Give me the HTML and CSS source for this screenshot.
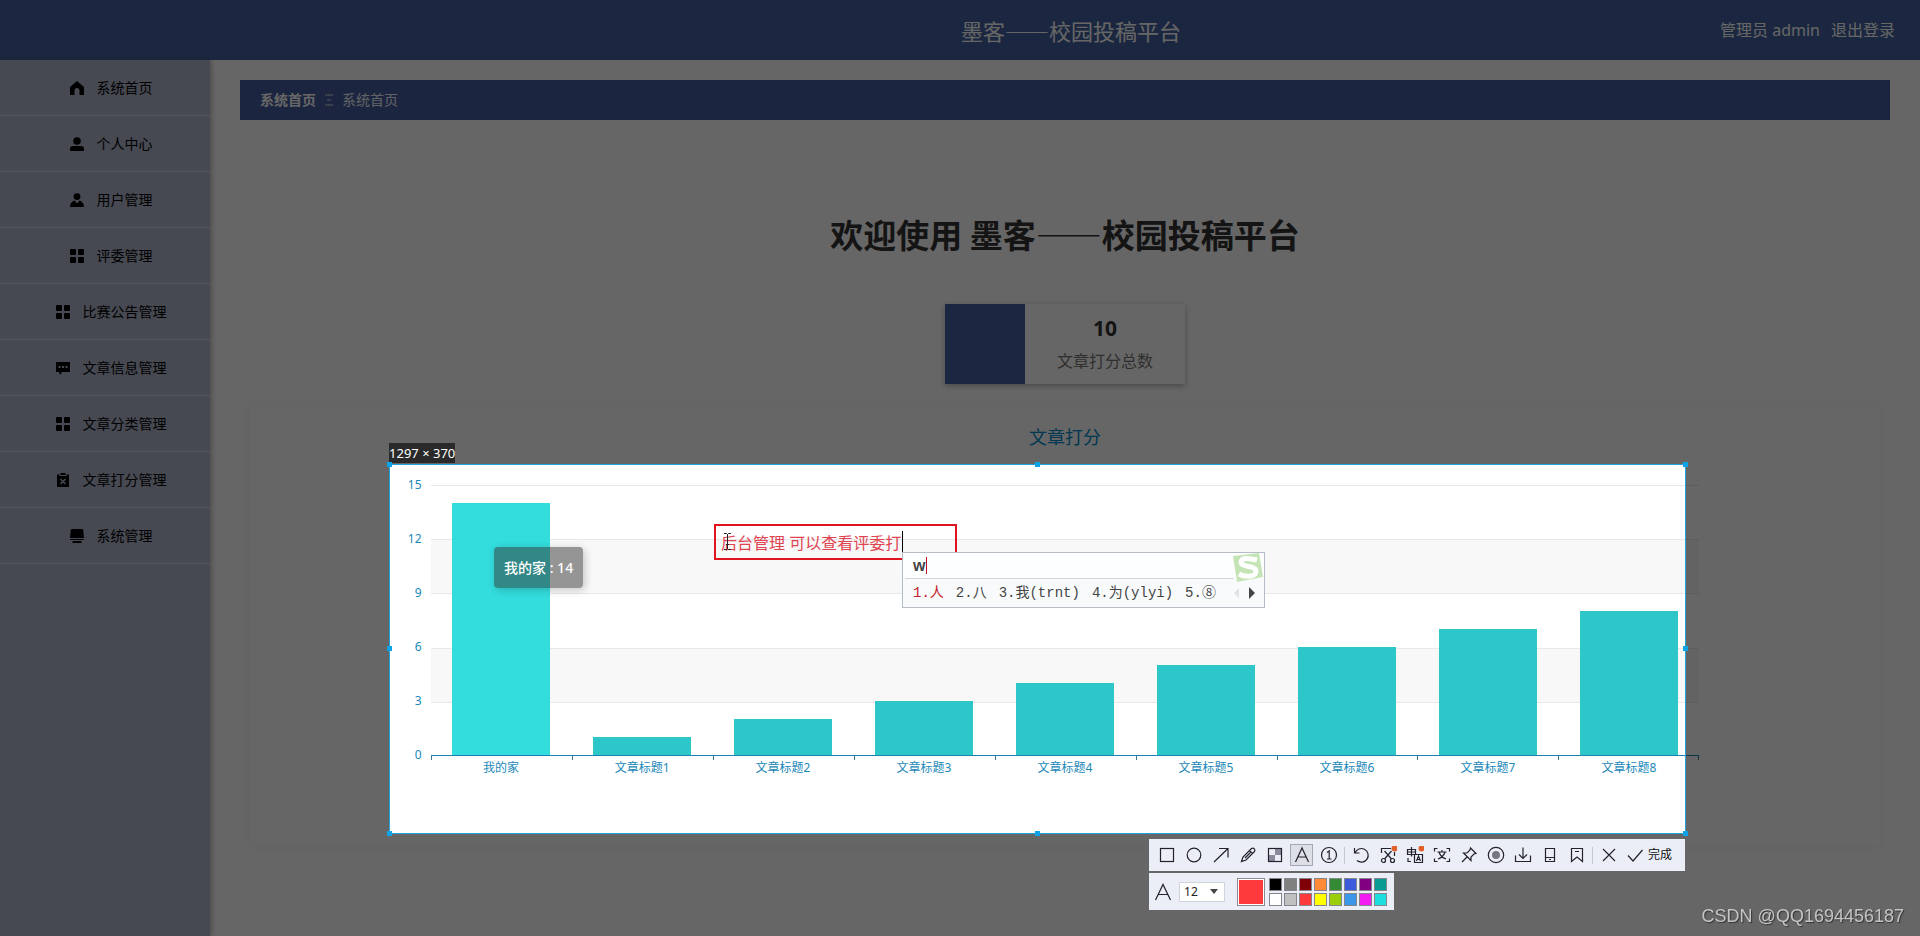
FILE: index.html
```html
<!DOCTYPE html>
<html lang="zh-CN">
<head>
<meta charset="utf-8">
<meta name="viewport" content="width=device-width, initial-scale=1">
<title>墨客——校园投稿平台</title>
<link rel="stylesheet" href="styles.css">
</head>
<body>
<svg class="sprite" aria-hidden="true">
  <symbol id="i-grid" viewBox="0 0 14 14"><rect x="0" y="0" width="6" height="6" rx="1"/><rect x="8" y="0" width="6" height="6" rx="1"/><rect x="0" y="8" width="6" height="6" rx="1"/><rect x="8" y="8" width="6" height="6" rx="1"/></symbol>
</svg>
<header class="header">
  <div class="header-title">墨客——校园投稿平台</div>
  <div class="header-user"><span>管理员 admin</span><a href="#logout">退出登录</a></div>
</header>
<div class="layout">
  <nav class="sidebar">
    <a class="nav-item" href="#home"><svg viewBox="0 0 14 14"><path d="M7 0 14 6V14H9.500V9.500a2.500 2.500 0 0 0-5 0V14H0V6z"/></svg><span>系统首页</span></a>
    <a class="nav-item" href="#me"><svg viewBox="0 0 14 14"><circle cx="7" cy="4" r="3.800"/><path d="M0 14V12Q0 9 3 9h8q3 0 3 3v2z"/></svg><span>个人中心</span></a>
    <a class="nav-item" href="#users"><svg viewBox="0 0 14 14"><circle cx="7" cy="3.600" r="3.400"/><path d="M0 14q0-5 4.500-6.500L7 10.500 9.500 7.500Q14 9 14 14z"/></svg><span>用户管理</span></a>
    <a class="nav-item" href="#judges"><svg><use href="#i-grid"/></svg><span>评委管理</span></a>
    <a class="nav-item" href="#notices"><svg><use href="#i-grid"/></svg><span>比赛公告管理</span></a>
    <a class="nav-item" href="#articles"><svg viewBox="0 0 14 14"><path fill-rule="evenodd" d="M0 1h14v10H6l-2 3-1-3H0zM2.500 5v2h2V5zm3.500 0v2h2V5zm3.500 0v2h2V5z"/></svg><span>文章信息管理</span></a>
    <a class="nav-item" href="#categories"><svg><use href="#i-grid"/></svg><span>文章分类管理</span></a>
    <a class="nav-item" href="#scores"><svg viewBox="0 0 14 14"><path d="M1 1.500h2.500V3h7V1.500H13V14H1zM4.500 0h5v2h-5z"/><path class="nav-cut" d="M4.500 6l5 5m0-5-5 5"/></svg><span>文章打分管理</span></a>
    <a class="nav-item" href="#system"><svg viewBox="0 0 14 14"><path d="M2 0h10q1 0 1.200 1L14 9H0L.8 1Q1 0 2 0zM0 10h14l-.5 1H.5zM2.500 12h9v2h-9z"/></svg><span>系统管理</span></a>
  </nav>
  <main class="main">
    <div class="breadcrumb"><b>系统首页</b><svg viewBox="0 0 10 12"><path d="M1 1h8M3 6h4M1 11h8"/></svg><span>系统首页</span></div>
    <h1 class="welcome">欢迎使用 墨客——校园投稿平台</h1>
    <section class="stat">
      <div class="stat-tile"></div>
      <div class="stat-body"><strong>10</strong><span>文章打分总数</span></div>
    </section>
    <section class="card">
      <h2 class="card-title">文章打分</h2>
      <div class="chart">
        <div class="y-axis"><span>15</span><span>12</span><span>9</span><span>6</span><span>3</span><span>0</span></div>
        <div class="bands"><i></i><i></i><i></i><i></i><i></i></div>
        <div class="bars">
          <div class="slot"><div class="bar bar-active" style="height:93.33%"></div></div>
          <div class="slot"><div class="bar" style="height:6.67%"></div></div>
          <div class="slot"><div class="bar" style="height:13.33%"></div></div>
          <div class="slot"><div class="bar" style="height:20%"></div></div>
          <div class="slot"><div class="bar" style="height:26.67%"></div></div>
          <div class="slot"><div class="bar" style="height:33.33%"></div></div>
          <div class="slot"><div class="bar" style="height:40%"></div></div>
          <div class="slot"><div class="bar" style="height:46.67%"></div></div>
          <div class="slot"><div class="bar" style="height:53.33%"></div></div>
        </div>
        <div class="x-axis"><span>我的家</span><span>文章标题1</span><span>文章标题2</span><span>文章标题3</span><span>文章标题4</span><span>文章标题5</span><span>文章标题6</span><span>文章标题7</span><span>文章标题8</span></div>
        <div class="tooltip">我的家 : 14</div>

        <div class="capture">
          <div class="capture-size">1297 × 370</div>
          <i class="handle h-nw"></i><i class="handle h-n"></i><i class="handle h-ne"></i><i class="handle h-w"></i><i class="handle h-e"></i><i class="handle h-sw"></i><i class="handle h-s"></i><i class="handle h-se"></i>

          <div class="note">
            <input class="note-input" type="text" aria-label="批注文字" value="后台管理 可以查看评委打">
            <i class="note-caret"></i>
            <svg class="ibeam" viewBox="0 0 7 17"><path d="M0 .5h2.500l1 1 1-1H7M3.500 1v15M0 16.500h2.500l1-1 1 1H7M2 11.500h3"/></svg>
            <div class="ime">
              <div class="ime-top"><b>w</b><i></i></div>
              <div class="ime-list"><span class="ime-first">1.人</span><span>2.八</span><span>3.我(trnt)</span><span>4.为(ylyi)</span><span>5.⑧</span>
                <svg class="ime-nav" viewBox="0 0 22 12"><path class="prev" d="M5 1v10L0 6z"/><path class="next" d="M15 0v12l6-6z"/></svg>
              </div>
              <svg class="ime-logo" viewBox="0 0 32 30"><path class="plate" d="M1 3 27 0l4 24-26 5z"/><path class="curve" d="M25 7Q10 3 9 9c0 6 15 3 15 9 0 7-12 6-17 3"/></svg>
            </div>
          </div>

          <div class="tools">
            <div class="toolbar">
              <button class="tool" aria-label="矩形"><svg viewBox="0 0 18 18"><rect x="2.500" y="2.500" width="13" height="13"/></svg></button>
              <button class="tool" aria-label="椭圆"><svg viewBox="0 0 18 18"><circle cx="9" cy="9" r="6.800"/></svg></button>
              <button class="tool" aria-label="箭头"><svg viewBox="0 0 18 18"><path d="M2 16 16 2.500M7 2.500h9v9"/></svg></button>
              <button class="tool" aria-label="画笔"><svg viewBox="0 0 18 18"><path d="M2.500 15.500 4 11 12.500 2.500q1.500-1 2.800.3T15.500 5.500L7 14zM10.500 4.500l3 3M6 12l6-6"/></svg></button>
              <button class="tool" aria-label="马赛克"><svg viewBox="0 0 18 18"><path class="shade" d="M9 3h6v6H9zM3 9h6v6H3z"/><rect x="2.500" y="2.500" width="13" height="13"/></svg></button>
              <button class="tool tool-on" aria-label="文字"><svg viewBox="0 0 18 18"><path d="M2.500 16 9 2l6.500 14M5 11h8"/></svg></button>
              <button class="tool" aria-label="序号"><svg viewBox="0 0 18 18"><circle cx="9" cy="9" r="7.500"/><path d="M7 6.500 9.200 5v8M7 13h4.500"/></svg></button>
              <i class="sep"></i>
              <button class="tool" aria-label="撤销"><svg viewBox="0 0 18 18"><path d="M2.500 2v5h5M3 7a6.800 6.800 0 1 1 2 7.500"/></svg></button>
              <button class="tool" aria-label="长截图"><svg viewBox="0 0 18 18"><path d="M2.500 7V2.500H12M15.500 6v4M5.500 5l7 8M12.500 5l-7 8"/><circle cx="4.500" cy="14.500" r="2"/><circle cx="13.500" cy="14.500" r="2"/><circle class="dot" cx="15.500" cy="2.500" r="3"/></svg></button>
              <button class="tool" aria-label="翻译"><svg viewBox="0 0 18 18"><path d="M1.500 3.500h8v5h-8zM5.500 1v9.500M1.500 6h8M2 12v3.500h3M8.500 8.500h8v8h-8zM10.500 15l2-5 2 5M11 13.500h3"/><circle class="dot" cx="15.500" cy="2.500" r="3"/></svg></button>
              <button class="tool" aria-label="文字识别"><svg viewBox="0 0 18 18"><path d="M1.500 5.500v-3h3M13.500 2.500h3v3M16.500 12.500v3h-3M4.500 15.500h-3v-3M4.500 6h9M9 4v2M6 6q1.500 5 7 7M12 6q-1.500 5-7 7"/></svg></button>
              <button class="tool" aria-label="钉在桌面"><svg viewBox="0 0 18 18"><path d="M10.500 2 16 7.500l-2 .5-3 3v3.500L3.500 7H7l3-3zM7.500 10.500 2 16"/></svg></button>
              <button class="tool" aria-label="录屏"><svg viewBox="0 0 18 18"><circle cx="9" cy="9" r="7.700"/><circle class="rec" cx="9" cy="9" r="4"/></svg></button>
              <button class="tool" aria-label="保存"><svg viewBox="0 0 18 18"><path d="M9 1.500V12M5 8.500 9 12.500l4-4M1.500 9.500v6h15v-6"/></svg></button>
              <button class="tool" aria-label="发送到手机"><svg viewBox="0 0 18 18"><path d="M4.500 2.500h9v13h-9zM4.500 11.500h9M8 13.500h2"/></svg></button>
              <button class="tool" aria-label="收藏"><svg viewBox="0 0 18 18"><path d="M3.500 2.500h11v13L9 11l-5.500 4.500zM7 5.500h4"/></svg></button>
              <i class="sep"></i>
              <button class="tool" aria-label="取消"><svg viewBox="0 0 18 18"><path d="m3 3 12 12M15 3 3 15"/></svg></button>
              <button class="done"><svg viewBox="0 0 18 18"><path d="m2 9.500 5 5.500L16.500 4"/></svg>完成</button>
            </div>
            <div class="toolbar toolbar-sub">
              <svg class="font-icon" viewBox="0 0 18 18"><path d="M1.500 17 9 1.500 16.500 17M4.500 11.500h9"/></svg>
              <span class="size-box">
                <select aria-label="字号"><option>12</option><option>14</option><option>16</option></select>
                <svg viewBox="0 0 8 5"><path d="M0 0h8L4 5z"/></svg>
              </span>
              <button class="swatch-big" aria-label="当前颜色"></button>
              <div class="palette">
                <button class="c1" aria-label="黑色"></button><button class="c2" aria-label="灰色"></button><button class="c3" aria-label="深红"></button><button class="c4" aria-label="橙色"></button><button class="c5" aria-label="绿色"></button><button class="c6" aria-label="蓝色"></button><button class="c7" aria-label="紫色"></button><button class="c8" aria-label="青色"></button>
                <button class="c9" aria-label="白色"></button><button class="c10" aria-label="浅灰"></button><button class="c11" aria-label="红色"></button><button class="c12" aria-label="黄色"></button><button class="c13" aria-label="黄绿"></button><button class="c14" aria-label="天蓝"></button><button class="c15" aria-label="品红"></button><button class="c16" aria-label="亮青"></button>
              </div>
            </div>
          </div>
        </div>
      </div>
    </section>
  </main>
</div>
<div class="watermark">CSDN @QQ1694456187</div>
</body>
</html>
```
FILE: styles.css
```css
* { box-sizing: border-box; }
body {
  margin: 0;
  min-height: 100vh;
  display: flex;
  flex-direction: column;
  overflow: hidden;
  background: #fff;
  color: #333;
  font: 14px/20px "Noto Sans", "Noto Sans CJK SC", sans-serif;
}
a { color: inherit; text-decoration: none; }
button { padding: 0; border: 0; background: none; font: inherit; color: inherit; }
.sprite { display: none; }

.header {
  display: grid;
  align-items: center;
  height: 60px;
  padding: 0 25px 0 222px;
  background: #4462a0;
  color: #fff;
}
.header-title {
  grid-area: 1 / 1;
  justify-self: center;
  padding-left: 25px;
  font: 22px/32px "Noto Sans CJK SC", sans-serif;
}
.header-user {
  grid-area: 1 / 1;
  justify-self: end;
  display: flex;
  gap: 11px;
  font-size: 16px;
  line-height: 24px;
}

.layout { flex: 1; display: flex; }
.sidebar {
  flex: 0 0 210px;
  background: #afb6ca;
  box-shadow: 1px 0 6px rgba(60, 60, 60, .4);
}
.nav-item {
  display: flex;
  align-items: center;
  justify-content: center;
  gap: 13px;
  height: 56px;
  padding-left: 12px;
  border-bottom: 1px solid #d3d8e6;
  color: #000;
}
.nav-item svg { width: 14px; height: 14px; }
.nav-cut { fill: none; stroke: #afb6ca; stroke-width: 1.5; }

.main { flex: 1; min-width: 0; padding: 20px 30px; }
.breadcrumb {
  display: flex;
  align-items: center;
  gap: 8px;
  height: 40px;
  padding: 0 20px;
  background: #465da0;
  color: #fff;
}
.breadcrumb svg { width: 10px; height: 12px; fill: none; stroke: #d5dae8; }
.breadcrumb span { color: #f2f4f8; }
.welcome {
  margin: 90px 0 46px;
  font: bold 33px/48px "Noto Sans CJK SC", sans-serif;
  text-align: center;
}
.stat {
  display: flex;
  width: 240px;
  height: 80px;
  margin: 0 auto;
  border-radius: 2px;
  box-shadow: 0 2px 6px rgba(0, 0, 0, .3);
}
.stat-tile { width: 80px; background: #4462a0; }
.stat-body {
  flex: 1;
  display: flex;
  flex-direction: column;
  align-items: center;
  justify-content: center;
  gap: 9px;
}
.stat-body strong { font-size: 21px; line-height: 24px; }
.stat-body span { font-size: 16px; line-height: 24px; color: #777; }

.card {
  margin: 23px 10px 0;
  padding: 18px 22px 22px;
  box-shadow: 0 0 12px rgba(0, 0, 0, .05);
}
.card-title {
  margin: 0 0 9px;
  font-size: 18px;
  line-height: 24px;
  font-weight: 400;
  text-align: center;
  color: #008acd;
}
.chart {
  position: relative;
  display: grid;
  grid-template-columns: 10% 1fr 10%;
  grid-template-rows: 27px 271px 68px;
  color: #1a88b8;
  font-size: 12px;
}
.y-axis {
  grid-area: 1 / 1 / 4 / 2;
  align-self: start;
  display: grid;
  grid-auto-rows: 54px;
  align-items: center;
  padding-right: 9px;
  text-align: right;
}
.bands { grid-area: 2 / 2; display: grid; }
.bands i { border-top: 1px solid #e8e8ea; }
.bands i:nth-child(even) { background: #f8f8f9; }
.bars { grid-area: 2 / 2; display: flex; border-bottom: 1px solid #1a84b0; }
.slot { flex: 1; display: flex; align-items: flex-end; justify-content: center; }
.bar { width: 69%; background: #2ec7c9; }
.bar-active { background: #33dcdd; }
.x-axis { grid-area: 3 / 2; display: flex; align-items: flex-start; }
.x-axis span {
  flex: 1;
  padding-top: 2px;
  text-align: center;
  background: linear-gradient(#3a7a95, #3a7a95) 0 0 / 1px 4px no-repeat;
}
.x-axis span:last-child {
  background:
    linear-gradient(#3a7a95, #3a7a95) 0 0 / 1px 4px no-repeat,
    linear-gradient(#3a7a95, #3a7a95) 100% 0 / 1px 4px no-repeat;
}
.tooltip {
  position: absolute;
  left: 14%;
  top: 89px;
  padding: 10px;
  border-radius: 4px;
  background: rgba(50, 50, 50, .5);
  box-shadow: 2px 2px 8px rgba(0, 0, 0, .2);
  color: #fff;
  font-size: 14px;
  font-weight: 500;
  line-height: 21px;
  white-space: nowrap;
}

/* Screen-capture selection; its spread shadow dims the rest of the page. */
.capture {
  position: absolute;
  z-index: 10;
  left: 7.38%;
  top: 6px;
  width: 81.78%;
  height: 370px;
  border: 1px solid #1fa5dc;
  box-shadow: 0 0 0 4000px rgba(0, 0, 0, .6);
}
.capture-size {
  position: absolute;
  left: -1px;
  bottom: calc(100% + 2px);
  background: #2a2a2a;
  color: #fff;
  font-size: 13px;
  line-height: 20px;
  white-space: nowrap;
}
.handle { position: absolute; width: 5px; height: 5px; background: #0ea2e6; }
.h-nw, .h-n, .h-ne { top: -3px; }
.h-sw, .h-s, .h-se { bottom: -3px; }
.h-nw, .h-w, .h-sw { left: -3px; }
.h-ne, .h-e, .h-se { right: -3px; }
.h-n, .h-s { left: calc(50% - 3px); }
.h-w, .h-e { top: calc(50% - 3px); }

.note { position: absolute; left: 324px; top: 59px; width: 243px; }
.note-input {
  display: block;
  width: 100%;
  height: 36px;
  padding: 0 5px;
  border: 2px solid #e0141e;
  background: transparent;
  color: #e04450;
  font: 16px/24px "Noto Sans", "Noto Sans CJK SC", sans-serif;
}
.note-caret { position: absolute; left: 188px; top: 7px; width: 1px; height: 21px; background: #000; }
.ibeam { position: absolute; left: 10px; top: 9px; width: 7px; height: 17px; fill: none; stroke: #222; }
.ime {
  position: absolute;
  left: 188px;
  top: 28px;
  width: 363px;
  border: 1px solid #b6bcc6;
  background: #fdfeff;
  color: #444;
}
.ime-top {
  display: flex;
  align-items: center;
  gap: 1px;
  height: 26px;
  margin: 0 30px 0 2px;
  padding-left: 8px;
  border-bottom: 1px solid #d4d7dd;
  font: 16px/24px "Liberation Sans", sans-serif;
}
.ime-top i { width: 1px; height: 17px; background: #c01020; }
.ime-list {
  display: flex;
  align-items: center;
  gap: 12px;
  height: 28px;
  padding: 0 8px 0 10px;
  background: #f8fafc;
  font: 14px/20px "Liberation Mono", "Noto Sans CJK SC", monospace;
  white-space: nowrap;
}
.ime-first { color: #c4202c; }
.ime-nav { width: 22px; height: 12px; margin-left: auto; }
.ime-nav .prev { fill: #dfe2e6; }
.ime-nav .next { fill: #444; }
.ime-logo { position: absolute; right: 0; top: 0; width: 32px; height: 30px; }
.ime-logo .plate { fill: #c4e4b6; }
.ime-logo .curve { fill: none; stroke: #fff; stroke-width: 5; }

.tools {
  position: absolute;
  right: 0;
  top: calc(100% + 6px);
  display: flex;
  flex-direction: column;
  gap: 2px;
}
.toolbar {
  display: flex;
  align-items: center;
  height: 32px;
  padding: 0 13px 0 4px;
  background: #ebedf7;
  color: #111;
  white-space: nowrap;
}
.toolbar svg { flex: none; fill: none; stroke: #22232e; stroke-width: 1.2; }
.tool { width: 27px; height: 22px; display: grid; place-items: center; }
.tool svg, .done svg { width: 18px; height: 18px; }
.tool-on { width: 23px; margin: 0 2px; border: 1px solid #a4a8b2; background: #dcdfe6; }
.toolbar .shade { fill: #8a8c9e; stroke: none; }
.toolbar .dot { fill: #e0602a; stroke: none; }
.toolbar .rec { fill: #76777f; stroke: none; }
.sep { width: 1px; height: 17px; margin: 0 2px; background: #c6c9d4; }
.done { display: flex; align-items: center; gap: 4px; padding-left: 4px; font-size: 12px; }
.toolbar-sub { align-self: flex-start; height: 37px; padding: 0 7px 0 5px; }
.font-icon { width: 18px; height: 18px; }
.size-box { display: grid; align-items: center; width: 46px; margin: 0 12px 0 7px; }
.size-box select {
  grid-area: 1 / 1;
  appearance: none;
  width: 100%;
  height: 20px;
  padding: 0 4px;
  border: 1px solid #d2d4dc;
  border-radius: 0;
  background: #fff;
  color: #222;
  font: 12px/16px "Noto Sans", sans-serif;
}
.size-box svg {
  grid-area: 1 / 1;
  justify-self: end;
  width: 8px;
  height: 5px;
  margin-right: 7px;
  pointer-events: none;
}
.size-box path { fill: #444; stroke: none; }
.swatch-big {
  width: 28px;
  height: 28px;
  margin-right: 4px;
  border: 1px solid #8a8a90;
  background: #ff3a3d;
  box-shadow: inset 0 0 0 1px #fff;
}
.palette { display: grid; grid-template-columns: repeat(8, 13px); gap: 2px; }
.palette button { height: 13px; border: 1px solid #85868c; }
.c1 { background: #000; }
.c2 { background: #808080; }
.c3 { background: #800008; }
.c4 { background: #ff8b37; }
.c5 { background: #358a35; }
.c6 { background: #3c5bdc; }
.c7 { background: #800080; }
.c8 { background: #089c92; }
.c9 { background: #fff; }
.c10 { background: #c0c0c0; }
.c11 { background: #ff3a3d; }
.c12 { background: #ff0; }
.c13 { background: #9acd0a; }
.c14 { background: #3c96e8; }
.c15 { background: #f31cf3; }
.c16 { background: #1cdede; }

.watermark {
  position: fixed;
  z-index: 20;
  right: 16px;
  bottom: 7px;
  color: #c4c4c4;
  font: 18px/26px "Liberation Sans", sans-serif;
  text-shadow: 1px 1px 1px rgba(0, 0, 0, .5);
}
```
